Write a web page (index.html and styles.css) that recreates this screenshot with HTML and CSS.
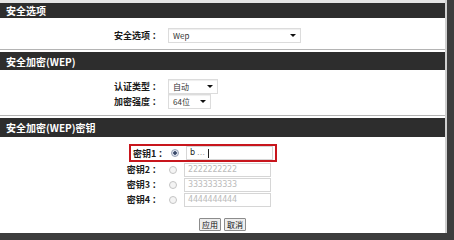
FILE: index.html
```html
<!DOCTYPE html>
<html lang="zh">
<head>
	<meta charset="UTF-8">
	<title>无线安全设置</title>
	<link rel="stylesheet" href="styles.css">
</head>
<body>
	<div class="frame">
		<div class="topline"></div>

		<div class="head head-1">安全选项</div>
		<div class="box box-1">
			<div class="row">
				<span class="lbl">安全选项 ：</span>
				<div class="select sel-mode">Wep<span class="arrow"></span></div>
			</div>
		</div>

		<div class="head head-2">安全加密(WEP)</div>
		<div class="box box-2">
			<div class="row">
				<span class="lbl">认证类型 ：</span>
				<div class="select sel-auth">自动<span class="arrow"></span></div>
			</div>
			<div class="row">
				<span class="lbl">加密强度 ：</span>
				<div class="select sel-len">64位<span class="arrow"></span></div>
			</div>
		</div>

		<div class="head head-3">安全加密(WEP)密钥</div>
		<div class="box box-3">
			<div class="keys">
				<div class="row key key-on">
					<span class="lbl">密钥1 ：</span>
					<span class="radio checked"></span>
					<div class="input">b<span class="dots">…</span><span class="caret"></span></div>
				</div>
				<div class="row key">
					<span class="lbl">密钥2 ：</span>
					<span class="radio"></span>
					<div class="input">2222222222</div>
				</div>
				<div class="row key">
					<span class="lbl">密钥3 ：</span>
					<span class="radio"></span>
					<div class="input">3333333333</div>
				</div>
				<div class="row key">
					<span class="lbl">密钥4 ：</span>
					<span class="radio"></span>
					<div class="input">4444444444</div>
				</div>
			</div>
			<div class="btns">
				<button class="btn">应用</button>
				<button class="btn">取消</button>
			</div>
		</div>
	</div>
</body>
</html>
```

FILE: styles.css
```css
html, body {
	margin: 0;
	padding: 0;
}
body {
	width: 454px;
	height: 240px;
	overflow: hidden;
	background: #3d3d3d;
	font-family: "Noto Sans CJK SC", "DejaVu Sans", sans-serif;
}
.frame {
	width: 445px;
	height: 233px;
	background: #fff;
	border-right: 2px solid #cfcfcf;
	overflow: hidden;
}
.topline {
	height: 3px;
	background: #e4e4e4;
}

.head {
	background: #2d2d2d;
	color: #fff;
	font-size: 10px;
	font-weight: bold;
	padding-left: 6px;
	display: flex;
	align-items: center;
}
.head-1 { height: 15px; }
.head-2 { height: 18px; }
.head-3 { height: 19px; }

.box {
	border-bottom: 1px solid #b4b4b4;
	margin-bottom: 2px;
}
.box-1 {
	height: 21px;
	padding-top: 10px;
}
.box-2 {
	height: 36px;
	padding-top: 9px;
}
.box-3 {
	height: 96px;
	border-bottom: 0;
	margin-bottom: 0;
}

.row {
	display: flex;
	align-items: center;
	height: 15px;
}
.lbl {
	width: 161px;
	text-align: right;
	font-size: 9px;
	font-weight: bold;
	color: #1a1a1a;
	white-space: nowrap;
	margin-right: 7px;
}

.select {
	position: relative;
	height: 13px;
	border: 1px solid #dcdcdc;
	background: #fff;
	box-shadow: inset 0 1px 1px #eee;
	font-size: 8px;
	color: #333;
	line-height: 13px;
	padding-left: 4px;
	box-sizing: content-box;
}
.sel-mode { width: 127px; }
.sel-auth { width: 44px; }
.sel-len { width: 37px; }
.arrow {
	position: absolute;
	right: 4px;
	top: 5px;
	width: 0;
	height: 0;
	border-left: 3px solid transparent;
	border-right: 3px solid transparent;
	border-top: 3px solid #111;
}

.keys {
	height: 63px;
	padding-top: 7px;
	overflow: hidden;
}
.key {
	height: 15px;
}
.key-on {
	width: 144px;
	height: 14px;
	margin-left: 129px;
	border: 2px solid #c8161d;
}
.key-on .lbl {
	width: 30px;
	margin-left: 2px;
}
.radio {
	width: 6px;
	height: 6px;
	border: 1px solid #c4c4c4;
	border-radius: 50%;
	background: #f4f4f4;
	margin-right: 7px;
	margin-left: 1px;
}
.radio.checked {
	background: radial-gradient(circle, #3a4a6a 0, #3a4a6a 1.5px, #dde3ee 2px);
	border-color: #9aa4b8;
}
.input {
	width: 82px;
	height: 12px;
	border: 1px solid #d6d6d6;
	font-size: 8px;
	line-height: 12px;
	padding-left: 3px;
	color: #bbb;
	font-family: "DejaVu Sans", sans-serif;
	letter-spacing: -0.2px;
}
.key-on .input {
	color: #222;
	display: flex;
	align-items: center;
}
.dots {
	color: #999;
	margin-left: 2px;
}
.caret {
	width: 1px;
	height: 9px;
	background: #222;
	margin-left: 3px;
}

.btns {
	display: flex;
	justify-content: center;
	gap: 3px;
	padding-top: 11px;
}
.btn {
	height: 13px;
	width: 22px;
	padding: 0;
	border: 1px solid #8c8c8c;
	background: #eee;
	font-family: "Noto Sans CJK SC", sans-serif;
	font-size: 8px;
	line-height: 11px;
	color: #111;
	border-radius: 1px;
}
```
